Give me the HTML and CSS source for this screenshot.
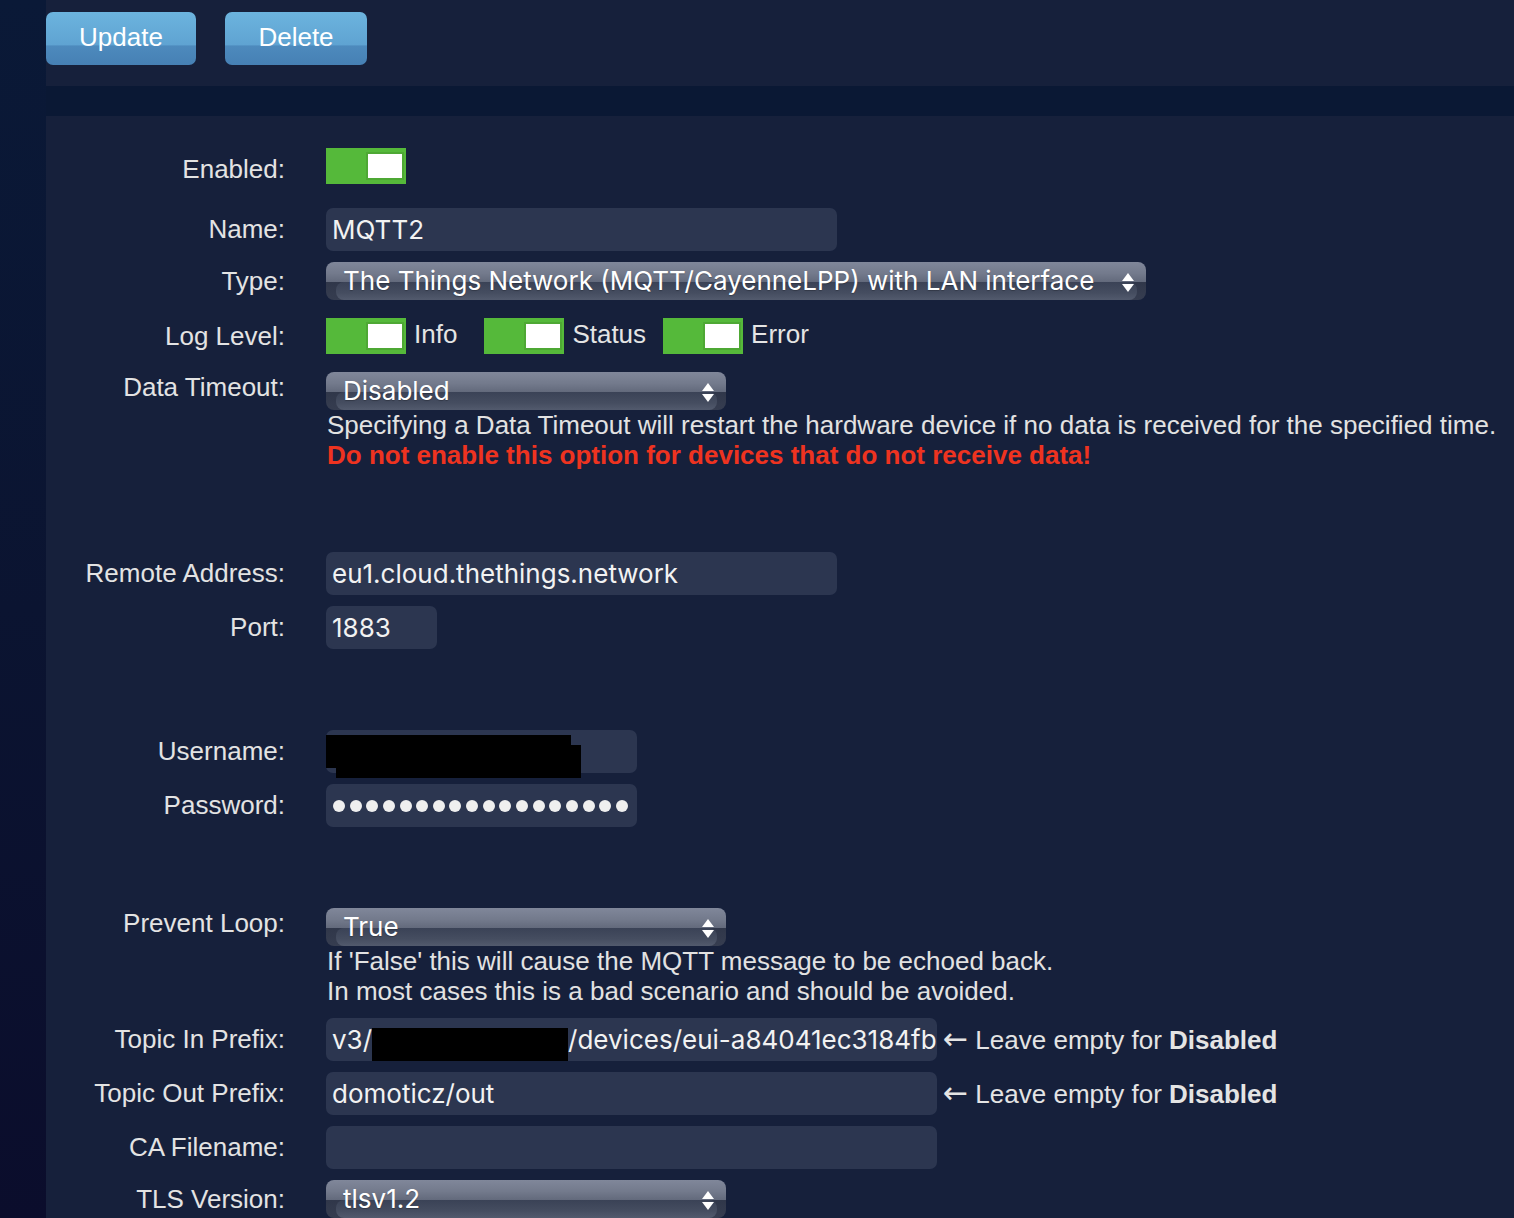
FILE: index.html
```html
<!DOCTYPE html>
<html>
<head>
<meta charset="utf-8">
<title>Controller</title>
<link rel="stylesheet" href="styles.css">
</head>
<body>
<div class="page">
  <div class="sidebar"></div>
  <div class="main">
    <div class="topbar">
      <div class="btn btn-update">Update</div>
      <div class="btn btn-delete">Delete</div>
    </div>
    <div class="stripe"></div>
    <div class="panel">
      <div class="row row-toggle row-first">
        <div class="label low">Enabled:</div>
        <div class="field"><span class="toggle"><span class="knob"></span></span></div>
      </div>
      <div class="row">
        <div class="label">Name:</div>
        <div class="field"><div class="input w511">MQTT2</div></div>
      </div>
      <div class="row">
        <div class="label lh38">Type:</div>
        <div class="field">
          <div class="select w820"><span class="sel-text">The Things Network (MQTT/CayenneLPP) with LAN interface</span>
            <svg class="arrows" width="12" height="19" viewBox="0 0 12 19"><path d="M6 0 L12 8 L0 8 Z M0 11 L12 11 L6 19 Z" fill="#fff"/></svg>
          </div>
        </div>
      </div>
      <div class="row row-toggle">
        <div class="label">Log Level:</div>
        <div class="field levels">
          <span class="toggle"><span class="knob"></span></span><span class="tlabel g1">Info</span>
          <span class="toggle"><span class="knob"></span></span><span class="tlabel g2">Status</span>
          <span class="toggle"><span class="knob"></span></span><span class="tlabel">Error</span>
        </div>
      </div>
      <div class="row">
        <div class="label lh30">Data Timeout:</div>
        <div class="field col">
          <div class="select w400"><span class="sel-text">Disabled</span>
            <svg class="arrows" width="12" height="19" viewBox="0 0 12 19"><path d="M6 0 L12 8 L0 8 Z M0 11 L12 11 L6 19 Z" fill="#fff"/></svg>
          </div>
          <div class="help">Specifying a Data Timeout will restart the hardware device if no data is received for the specified time.</div>
          <div class="help warn">Do not enable this option for devices that do not receive data!</div>
        </div>
      </div>
      <div class="spacer first"></div>
      <div class="row">
        <div class="label">Remote Address:</div>
        <div class="field"><div class="input w511">eu1.cloud.thethings.network</div></div>
      </div>
      <div class="row">
        <div class="label">Port:</div>
        <div class="field"><div class="input w111">1883</div></div>
      </div>
      <div class="spacer"></div>
      <div class="row">
        <div class="label">Username:</div>
        <div class="field">
          <div class="input w311">
            <span class="redact r1"></span><span class="redact r2"></span>
          </div>
        </div>
      </div>
      <div class="row">
        <div class="label">Password:</div>
        <div class="field">
          <div class="input w311 dots">
            <span class="dot"></span><span class="dot"></span><span class="dot"></span><span class="dot"></span><span class="dot"></span><span class="dot"></span><span class="dot"></span><span class="dot"></span><span class="dot"></span><span class="dot"></span><span class="dot"></span><span class="dot"></span><span class="dot"></span><span class="dot"></span><span class="dot"></span><span class="dot"></span><span class="dot"></span><span class="dot"></span>
          </div>
        </div>
      </div>
      <div class="spacer"></div>
      <div class="row">
        <div class="label lh30">Prevent Loop:</div>
        <div class="field col">
          <div class="select w400"><span class="sel-text">True</span>
            <svg class="arrows" width="12" height="19" viewBox="0 0 12 19"><path d="M6 0 L12 8 L0 8 Z M0 11 L12 11 L6 19 Z" fill="#fff"/></svg>
          </div>
          <div class="help">If 'False' this will cause the MQTT message to be echoed back.</div>
          <div class="help last">In most cases this is a bad scenario and should be avoided.</div>
        </div>
      </div>
      <div class="row">
        <div class="label">Topic In Prefix:</div>
        <div class="field">
          <div class="input w611 clip">v3/<span class="redact-inline"></span>/devices/eui-a84041ec3184fb</div>
          <span class="note"><span class="arrow">&larr;</span> Leave empty for <b>Disabled</b></span>
        </div>
      </div>
      <div class="row">
        <div class="label">Topic Out Prefix:</div>
        <div class="field">
          <div class="input w611">domoticz/out</div>
          <span class="note"><span class="arrow">&larr;</span> Leave empty for <b>Disabled</b></span>
        </div>
      </div>
      <div class="row">
        <div class="label">CA Filename:</div>
        <div class="field"><div class="input w611"></div></div>
      </div>
      <div class="row">
        <div class="label lh38">TLS Version:</div>
        <div class="field">
          <div class="select w400"><span class="sel-text">tlsv1.2</span>
            <svg class="arrows" width="12" height="19" viewBox="0 0 12 19"><path d="M6 0 L12 8 L0 8 Z M0 11 L12 11 L6 19 Z" fill="#fff"/></svg>
          </div>
        </div>
      </div>
    </div>
  </div>
</div>
</body>
</html>
```
FILE: styles.css
```css
html, body {
  margin: 0;
  padding: 0;
  background: #16203b;
  height: 1218px;
  overflow: hidden;
}
body {
  font-family: "Liberation Sans", Arial, sans-serif;
  color: #e4e4e4;
}
.page {
  display: flex;
  min-height: 1218px;
}
.sidebar {
  width: 46px;
  flex: none;
  background: linear-gradient(to bottom, #0a1937 0%, #0b1431 50%, #0b0d2c 100%);
}
.main {
  flex: 1;
  display: flex;
  flex-direction: column;
}
.topbar {
  height: 74px;
  padding-top: 12px;
  display: flex;
  gap: 29px;
  background: #16203b;
}
.btn {
  height: 53px;
  border-radius: 7px;
  background: linear-gradient(to bottom, #6cb4de 0%, #5fa3d2 62%, #4d8abd 64%, #4680b4 100%);
  color: #fff;
  font-size: 26px;
  line-height: 51px;
  text-align: center;
  box-sizing: border-box;
}
.btn-update { width: 150px; }
.btn-delete { width: 142px; }
.stripe {
  height: 30px;
  background: #0a1834;
}
.panel {
  flex: 1;
  background: #16203b;
  padding-top: 25px;
  display: flex;
  flex-direction: column;
  gap: 11px;
}
.row {
  display: flex;
  align-items: flex-start;
}
.label {
  width: 239px;
  margin-right: 41px;
  flex: none;
  text-align: right;
  font-size: 26px;
  line-height: 43px;
  color: #e3e3e3;
  white-space: nowrap;
}
.label.lh38 { line-height: 38px; }
.label.lh30 { line-height: 30px; }
.row-toggle { padding: 7px 0 7px; }
.row-first { padding-bottom: 13px; }
.row-toggle .label { line-height: 36px; }
.row-toggle .label.low { padding-top: 3px; margin-bottom: -3px; }
.field {
  display: flex;
  align-items: center;
}
.field.col {
  flex-direction: column;
  align-items: flex-start;
}
.toggle {
  width: 80px;
  height: 36px;
  background: #55b93a;
  position: relative;
  flex: none;
  display: block;
}
.knob {
  position: absolute;
  right: 4px;
  top: 6px;
  width: 34px;
  height: 24px;
  background: #fff;
  box-shadow: 0 0 0 2px #4ea834;
}
.levels .tlabel {
  font-size: 26px;
  line-height: 32px;
  align-self: flex-start;
  margin-left: 8px;
  color: #e4e4e4;
}
.levels .g1 { margin-right: 27px; }
.levels .g2 { margin-right: 17px; }
.input {
  height: 43px;
  box-sizing: border-box;
  background: #2c3650;
  border-radius: 7px;
  padding-left: 6px;
  font-family: Inter, "Noto Sans", sans-serif;
  font-size: 26px;
  line-height: 43px;
  color: #f2f2f2;
  white-space: nowrap;
  position: relative;
}
.w511 { width: 511px; }
.w111 { width: 111px; }
.w311 { width: 311px; }
.w611 { width: 611px; }
.w400 { width: 400px; }
.w820 { width: 820px; }
.clip {
  overflow: hidden;
  padding-right: 6px;
}
.redact {
  position: absolute;
  background: #000;
  width: 245px;
  height: 33px;
}
.redact.r1 { left: 0; top: 5px; }
.redact.r2 { left: 10px; top: 15px; }
.redact-inline {
  display: inline-block;
  width: 196px;
  height: 36px;
  background: #000;
  vertical-align: -15px;
}
.dots {
  display: flex;
  align-items: center;
  gap: 4.65px;
  padding-left: 7px;
}
.dot {
  width: 12px;
  height: 12px;
  border-radius: 50%;
  background: #efefef;
  flex: none;
}
.select {
  height: 38px;
  border-radius: 8px;
  position: relative;
  overflow: hidden;
  background: linear-gradient(to bottom, #80879a 0%, #737a8c 30%, #636a7c 52%, #30374a 53%, #363d50 100%);
  font-family: Inter, "Noto Sans", sans-serif;
  font-size: 26px;
  line-height: 38px;
  color: #fff;
  flex: none;
}
.select::before {
  content: "";
  position: absolute;
  left: 10px;
  right: 9px;
  top: 53%;
  bottom: 0;
  border-radius: 8px;
  background: linear-gradient(to bottom, #3a4256 0%, #454d60 60%, #525a6d 100%);
}
.sel-text {
  position: relative;
  z-index: 1;
  padding-left: 17px;
  white-space: nowrap;
  text-shadow: 0 1px 1px rgba(0, 0, 0, 0.25);
}
.arrows {
  position: absolute;
  right: 12px;
  top: 11px;
  z-index: 1;
}
.help {
  font-size: 26px;
  line-height: 30px;
  color: #e2e2e2;
  white-space: nowrap;
  margin-left: 1px;
}
.help.last { margin-bottom: 1px; }
.help.warn {
  color: #ee3320;
  font-weight: bold;
}
.note {
  margin-left: 6px;
  font-size: 26px;
  line-height: 30px;
  color: #e4e4e4;
  white-space: nowrap;
}
.note .arrow {
  font-family: "DejaVu Sans", sans-serif;
  font-size: 30px;
  line-height: 26px;
}
.note b { font-weight: bold; }
.spacer { height: 59px; flex: none; }
.spacer.first { height: 60px; }
```
